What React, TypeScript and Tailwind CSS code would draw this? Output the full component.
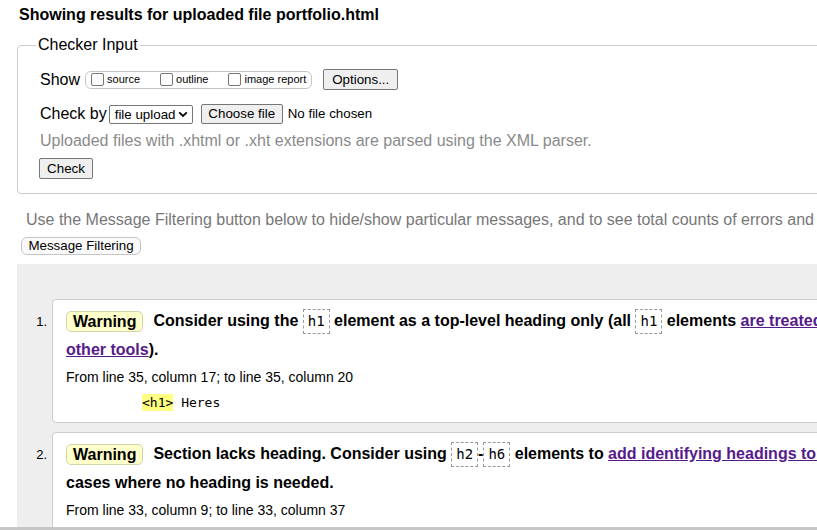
import React from "react";

const mono = "font-['DejaVu_Sans_Mono','Liberation_Mono',monospace]";

function Code({ children }: { children: React.ReactNode }) {
  return (
    <span
      className={`inline-block align-middle border border-dashed border-[#999] px-[4px] py-[3px] ${mono} text-[14px] leading-[17px] font-normal`}
    >
      {children}
    </span>
  );
}

function Badge() {
  return (
    <span className="inline-block align-middle bg-[#ffffcc] border border-[#d4d4aa] rounded-[5px] px-[6px] leading-[19px] mr-[10px]">
      Warning
    </span>
  );
}

function Btn({ children, className = "" }: { children: React.ReactNode; className?: string }) {
  return (
    <span
      className={`inline-flex items-center justify-center bg-[#efefef] border border-[#767676] rounded-[2px] text-[13.33px] leading-[16px] text-black ${className}`}
    >
      {children}
    </span>
  );
}

function Check({ label, className = "" }: { label: string; className?: string }) {
  return (
    <span className={`flex items-center ${className}`}>
      <span className="block w-[13px] h-[13px] border border-[#767676] rounded-[2px] bg-white" />
      <span className="ml-[3px] text-[11px] leading-[13px]">{label}</span>
    </span>
  );
}

export default function App() {
  return (
    <div className="relative w-[817px] h-[530px] overflow-hidden bg-white text-black font-['Liberation_Sans',Arial,sans-serif]">
      <div className="w-[1300px]">
        <h2 className="text-[16px] font-bold leading-[18px] pt-[6px] pl-[19px]">
          Showing results for uploaded file portfolio.html
        </h2>

        <fieldset className="mt-[12px] ml-[17px] border border-[#ccc] rounded-[4px] pl-[18px] pt-[14px] pb-[14px]">
          <legend className="px-[2px] text-[16px] leading-[18px]">Checker Input</legend>
          <div className="ml-[4px]">
            <div className="flex items-center h-[23px]">
              <span className="text-[16px] leading-[18px]">Show</span>
              <span className="ml-[5px] flex items-center h-[18px] border border-[#c4c4c4] rounded-[6px] pl-[5px] pr-[5px]">
                <Check label="source" />
                <Check label="outline" className="ml-[20px]" />
                <Check label="image report" className="ml-[20px]" />
              </span>
              <Btn className="ml-[11px] w-[75px] h-[21px]">Options...</Btn>
            </div>

            <div className="flex items-center h-[24px] mt-[11px]">
              <span className="text-[16px] leading-[18px]">Check by</span>
              <span className="ml-[2px] flex items-center justify-between w-[84px] h-[19px] border border-[#767676] rounded-[2px] pl-[5px] pr-[4px] text-[13.33px] leading-[15px] bg-white">
                <span>file upload</span>
                <svg width="10" height="7" viewBox="0 0 10 7" className="block">
                  <path d="M1.2 1.4 L5 5 L8.8 1.4" fill="none" stroke="#000" strokeWidth="1.8" />
                </svg>
              </span>
              <Btn className="ml-[8px] w-[82px] h-[20px]">Choose file</Btn>
              <span className="ml-[5px] text-[13.33px] leading-[16px]">No file chosen</span>
            </div>

            <div className="mt-[5px] text-[16px] leading-[20px] text-[#8a8a8a] whitespace-nowrap">
              Uploaded files with .xhtml or .xht extensions are parsed using the XML parser.
            </div>

            <div className="mt-[7px] flex">
              <Btn className="-ml-[1px] w-[54px] h-[21px]">Check</Btn>
            </div>
          </div>
        </fieldset>

        <p className="mt-[16px] pl-[26px] text-[16px] leading-[20px] text-[#777] whitespace-nowrap">
          Use the Message Filtering button below to hide/show particular messages, and to see total counts of errors and warnings.
        </p>

        <div className="mt-[7px] ml-[21px] flex">
          <span className="inline-flex items-center justify-center w-[120px] h-[18px] rounded-[6px] border border-[#c4c4c4] bg-[#fafafa] text-[13.33px] leading-[16px]">
            Message Filtering
          </span>
        </div>

        <div className="mt-[9px] ml-[17px] bg-[#eeeeee] pt-[35px] h-[400px]">
          <ol>
            <li className="flex items-baseline">
              <span className="w-[35px] shrink-0 text-right pr-[5px] text-[13px]">1.</span>
              <div className="flex-1 bg-white border border-[#ccc] rounded-[4px] pl-[13px] pt-[6px] pb-[11px]">
                <div className="h-[29px] leading-[29px] whitespace-nowrap font-bold text-[16px]">
                  <Badge />
                  Consider using the <Code>h1</Code> element as a top-level heading only (all <Code>h1</Code> elements{" "}
                  <a className="text-[#551a8b] underline">are treated as top-level headings by many screen readers and</a>
                </div>
                <div className="leading-[29px] whitespace-nowrap font-bold text-[16px]">
                  <a className="text-[#551a8b] underline">other tools</a>).
                </div>
                <div className="mt-[3px] text-[14px] leading-[20px] whitespace-nowrap">
                  From line 35, column 17; to line 35, column 20
                </div>
                <div className={`mt-[7px] pl-[76px] ${mono} text-[13px] leading-[17px] whitespace-pre`}>
                  <span className="inline-block bg-[#ffff80] leading-[17px]">&lt;h1&gt;</span> Heres
                </div>
              </div>
            </li>
            <li className="flex items-baseline mt-[9px]">
              <span className="w-[35px] shrink-0 text-right pr-[5px] text-[13px]">2.</span>
              <div className="flex-1 bg-white border border-[#ccc] rounded-[4px] pl-[13px] pt-[6px] pb-[10px]">
                <div className="h-[29px] leading-[29px] whitespace-nowrap font-bold text-[16px]">
                  <Badge />
                  Section lacks heading. Consider using <Code>h2</Code>-<Code>h6</Code> elements to{" "}
                  <a className="text-[#551a8b] underline">add identifying headings to all sections</a>, or else use a{" "}
                  <Code>div</Code> element instead for any
                </div>
                <div className="leading-[29px] whitespace-nowrap font-bold text-[16px]">
                  cases where no heading is needed.
                </div>
                <div className="mt-[3px] text-[14px] leading-[20px] whitespace-nowrap">
                  From line 33, column 9; to line 33, column 37
                </div>
                <div className={`mt-[7px] pl-[76px] ${mono} text-[13px] leading-[17px] whitespace-pre`}>
                  <span className="inline-block bg-[#ffff80] leading-[17px]">&lt;section&gt;</span>
                </div>
              </div>
            </li>
          </ol>
        </div>
      </div>
      <div className="absolute left-0 right-0 bottom-0 h-[3px] bg-[#c6c6c6]" />
    </div>
  );
}
